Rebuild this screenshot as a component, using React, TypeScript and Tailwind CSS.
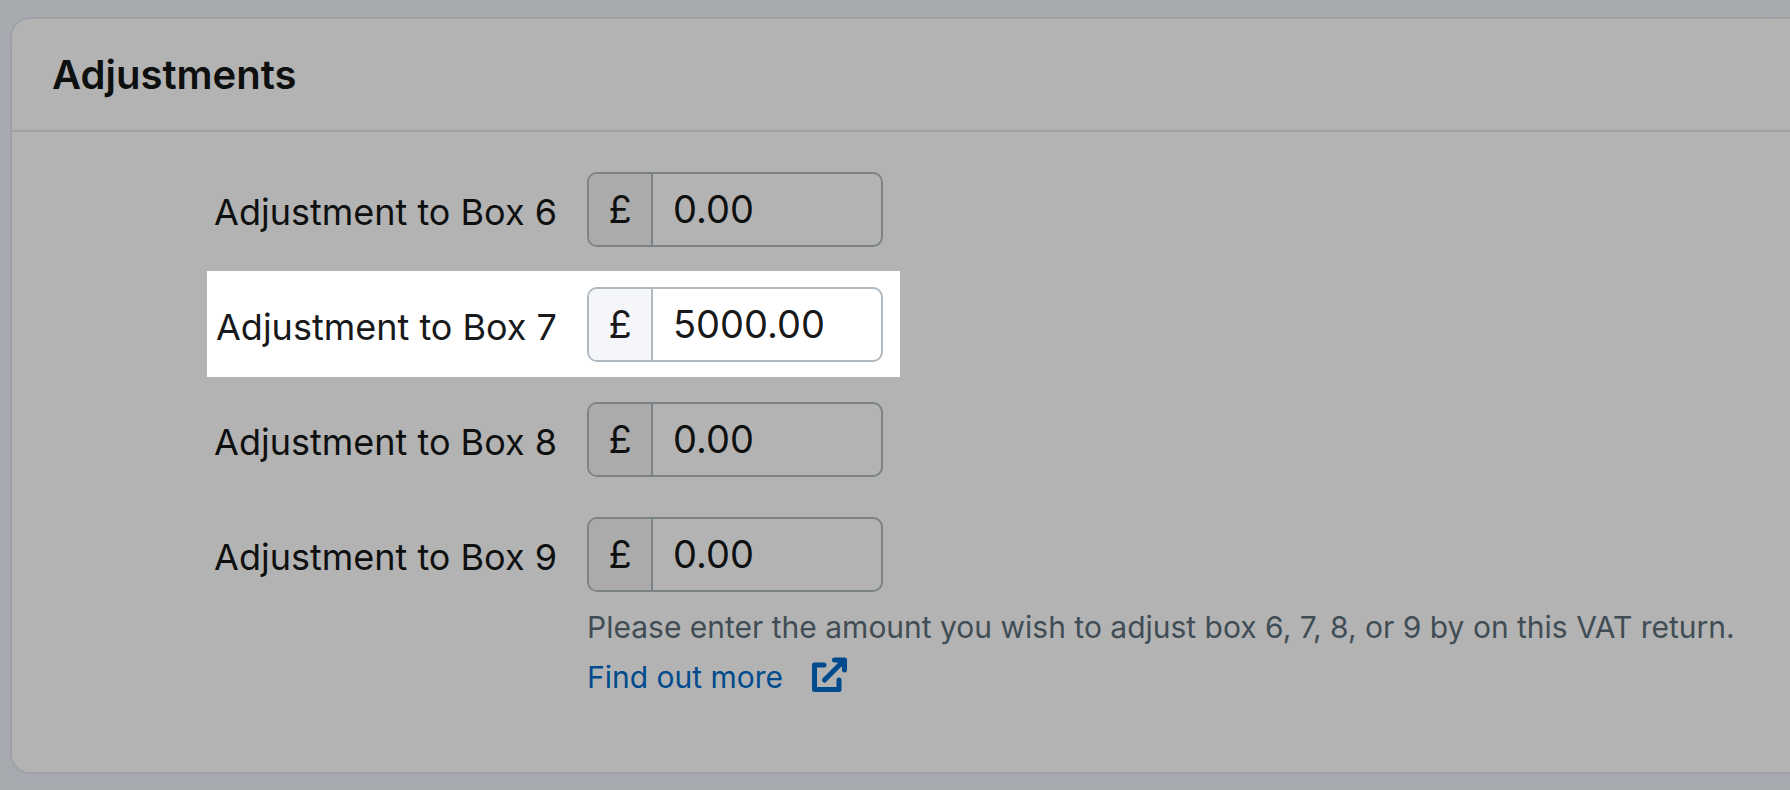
type Field = {
  id: string
  label: string
  value: string
}

const ExternalLinkIcon = () => (
  <svg
    viewBox="0 0 36 36"
    className="mb-1 size-9"
    fill="none"
    stroke="currentColor"
    strokeWidth="5"
    strokeLinecap="round"
    strokeLinejoin="round"
    aria-hidden="true"
  >
    <path d="M13 8H3.500v24.500h24.500V23" />
    <path d="M13.500 23 32 4.500" />
    <path d="M23.500 3h10v10" />
    <path d="M27 4h5v5z" fill="currentColor" strokeWidth="3" />
  </svg>
)

const AmountField = ({ id, label, value }: Field) => (
  <>
    <label htmlFor={id} className="w-[350px] pt-1 text-right text-4xl whitespace-nowrap">
      {label}
    </label>
    <div className="flex h-[75px] w-[296px] overflow-hidden rounded-[10px] border-2 border-(--line)">
      <span className="flex w-[64px] shrink-0 items-center justify-center border-r-2 border-(--line) bg-(--prefix) text-[38px]">
        £
      </span>
      <input id={id} type="text" defaultValue={value} className="min-w-0 flex-1 pl-5 text-[38px] outline-none" />
    </div>
  </>
)

// everything outside the spotlight row uses the dimmed palette
const dimmed = '[--line:#7c8387] [--prefix:#ababab]'
const spotlight = 'bg-white text-[#17191b] [--line:#b1b9c0] [--prefix:#f4f6f9]'

export default function App() {
  return (
    <main className="min-h-screen bg-[#a8acb0] pt-[17px] pb-[16px] pl-[10px] font-['Inter',sans-serif] text-[#0e1010]">
      <section className="rounded-l-[20px] border-2 border-r-0 border-[#a0a1a5] bg-[#b3b3b3] shadow-[0_4px_20px_#a4a9b2]">
        <header className="border-b-2 border-[#a0a0a6] px-10 py-8">
          <h1 className="text-[40px] leading-[47px] font-semibold">Adjustments</h1>
        </header>

        <form className="pt-6 pb-[70px] pl-[195px]">
          <div className="flex w-fit flex-col gap-[9px]">
            <div className={`flex items-center gap-[30px] pt-4 pr-[17px] pb-[15px] ${dimmed}`}>
              <AmountField id="box6" label="Adjustment to Box 6" value="0.00" />
            </div>
            <div className={`flex items-center gap-[30px] pt-4 pr-[17px] pb-[15px] ${spotlight}`}>
              <AmountField id="box7" label="Adjustment to Box 7" value="5000.00" />
            </div>
            <div className={`flex items-center gap-[30px] pt-4 pr-[17px] pb-[15px] ${dimmed}`}>
              <AmountField id="box8" label="Adjustment to Box 8" value="0.00" />
            </div>
            <div className={`flex items-center gap-[30px] pt-4 pr-[17px] ${dimmed}`}>
              <AmountField id="box9" label="Adjustment to Box 9" value="0.00" />
            </div>
          </div>

          <div className="pt-[10px] pl-[380px] text-[30px] leading-[50px]">
            <p className="text-[#414d55]">Please enter the amount you wish to adjust box 6, 7, 8, or 9 by on this VAT return.</p>
            <a href="#" className="flex w-fit items-center gap-7 text-[#004b8d]">
              Find out more
              <ExternalLinkIcon />
            </a>
          </div>
        </form>
      </section>
    </main>
  )
}
